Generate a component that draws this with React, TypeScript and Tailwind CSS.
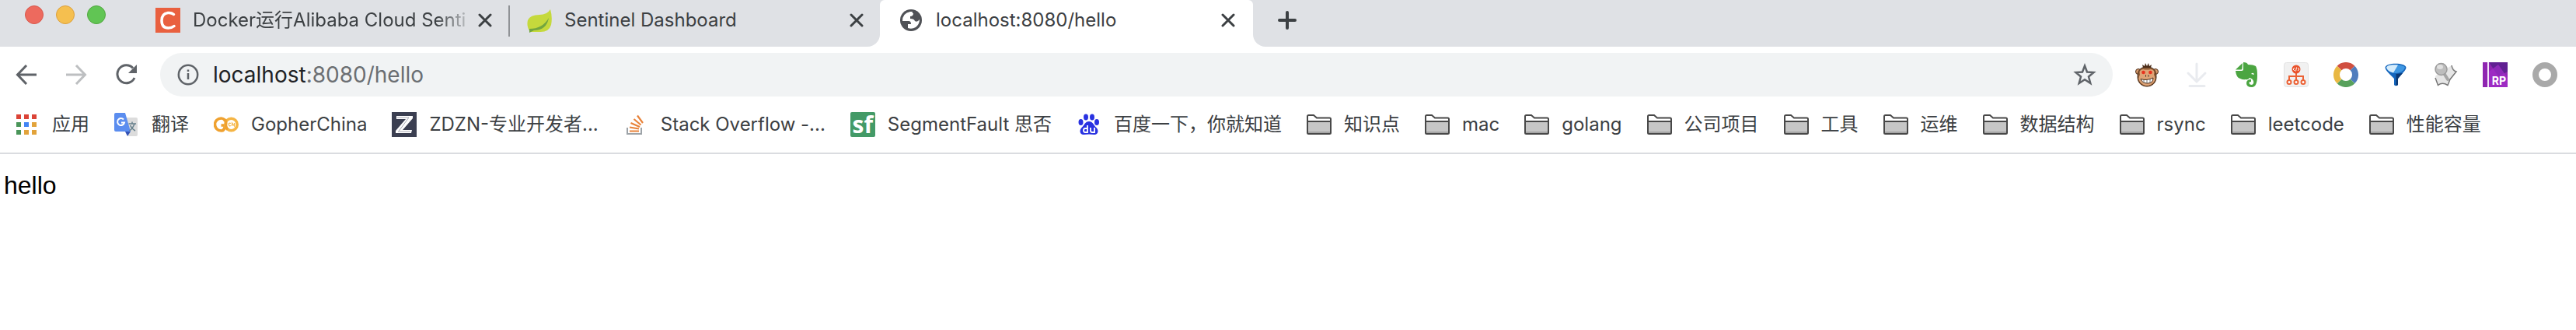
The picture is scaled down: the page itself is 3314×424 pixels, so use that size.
import { ReactNode } from "react";

const bookmarkText = "text-2xl leading-8 whitespace-nowrap text-[#3c4043]";

function Close() {
  return (
    <button aria-label="Close tab" className="flex size-6 items-center justify-center">
      <svg viewBox="0 0 18 18" className="size-[18px]" stroke="#3c4043" strokeWidth="3" strokeLinecap="round">
        <path d="M2 2L16 16M16 2L2 16" />
      </svg>
    </button>
  );
}

function FolderIcon() {
  return (
    <svg viewBox="0 0 32 32" className="size-8">
      <path d="M1 26V5.500Q1 4 2.500 4H9L13 7.500H29.500Q31 7.500 31 9V26.500Q31 28 29.500 28H2.500Q1 28 1 26.500Z" fill="#fff" />
      <path d="M2 12H30V27H2Z" fill="#c6c6c6" />
      <path d="M2 25H30V27H2Z" fill="#a6a6a6" />
      <path d="M1 12H31M1 26V5.500Q1 4 2.500 4H9L13 7.500H29.500Q31 7.500 31 9V26.500Q31 28 29.500 28H2.500Q1 28 1 26.500Z" fill="none" stroke="#484848" strokeWidth="2" />
    </svg>
  );
}

const appDots = ["#db4437", "#db4437", "#db4437", "#4a9559", "#4285f4", "#e2a33b", "#4a9559", "#e2a33b", "#e2a33b"];

function AppsIcon() {
  return (
    <svg viewBox="0 0 26 26" className="size-[26px]">
      {appDots.map((fill, i) => (
        <rect key={i} x={(i % 3) * 10} y={Math.floor(i / 3) * 10} width="6" height="6" fill={fill} />
      ))}
    </svg>
  );
}

function TranslateIcon() {
  return (
    <svg viewBox="0 0 32 32" className="size-8">
      <path d="M12 7H28Q30 7 30 9V29Q30 31 28 31H18Z" fill="#dcdcdc" />
      <path d="M14 25H21L17 31Z" fill="#3352b5" />
      <path d="M2 1H14L21 25H2Q0 25 0 23V3Q0 1 2 1Z" fill="#5b8def" />
      <path d="M12 9.500A4.500 4.500 0 1 0 13 13.500H9" fill="none" stroke="#fff" strokeWidth="2" />
      <path d="M18.500 15H28M23 12.500V15M26 15Q24 21 19.500 24M20.500 17Q23 22 27 24" fill="none" stroke="#67808c" strokeWidth="1.500" />
    </svg>
  );
}

function GopherIcon() {
  return (
    <svg viewBox="0 0 32 32" className="size-8" fill="none">
      <path d="M14 10Q12 8 9.500 8A8 8 0 0 0 9.500 24Q14 24 14.500 17H9.500" stroke="#efa12f" strokeWidth="3.600" />
      <circle cx="22.500" cy="16" r="7.700" stroke="#f5b545" strokeWidth="3.600" />
      <path d="M13 9.500Q16.500 11 15.500 17Q15.500 20 18 22.500" stroke="#efa12f" strokeWidth="3.600" />
      <path d="M22 14.500Q19 13.500 19.300 16T22 17.500M23.500 18V14L26.500 18V14" stroke="#f5b545" strokeWidth="1.200" />
    </svg>
  );
}

function ZIcon() {
  return (
    <svg viewBox="0 0 32 32" className="size-8">
      <path d="M0 0H32V32H0Z" fill="#3b3f51" />
      <path d="M6 5H27V8L14 23H26L25 27H5V24L18 9H6Z" fill="#fff" />
      <path d="M7 7H22M22 7L9 24.500M8 25H24" fill="none" stroke="#a8a9b3" strokeWidth="1" />
    </svg>
  );
}

function StackIcon() {
  return (
    <svg viewBox="0 0 32 32" className="size-8" fill="none">
      <path d="M5 20V28H23V20" stroke="#9da3a8" strokeWidth="2" />
      <path d="M8 24.500H20M8 19.500L20 21.500M9.500 14L21 19M13.500 9L22.500 16.500M18 4.500L25 14" stroke="#e8833a" strokeWidth="2.200" />
    </svg>
  );
}

function SegmentIcon() {
  return (
    <span className="flex size-8 items-center justify-center rounded-xs bg-[#439a67] font-['Open_Sans',sans-serif] text-[30px] leading-8 font-bold text-white">
      sf
    </span>
  );
}

function BaiduIcon() {
  return (
    <svg viewBox="0 0 32 32" className="size-8" fill="#2932e1">
      <ellipse cx="5.500" cy="13" rx="3" ry="4" />
      <ellipse cx="12" cy="6.500" rx="3" ry="4" />
      <ellipse cx="20" cy="6.500" rx="3" ry="4" />
      <ellipse cx="26" cy="13" rx="3" ry="4" />
      <path d="M16 12C11 12 10 17 7 19.500C3 23 4 29 9 29Q16 28 23 29C28 29 29 23 25 19.500C22 17 21 12 16 12Z" />
      <path d="M14 17V26H11Q9 26 9 23.500T11 21H14M18 20V24Q18 26 20 26H23V20" fill="none" stroke="#fff" strokeWidth="1.800" />
    </svg>
  );
}

const bookmarks: { label: string; icon: ReactNode }[] = [
  { label: "翻译", icon: <TranslateIcon /> },
  { label: "GopherChina", icon: <GopherIcon /> },
  { label: "ZDZN-专业开发者...", icon: <ZIcon /> },
  { label: "Stack Overflow -...", icon: <StackIcon /> },
  { label: "SegmentFault 思否", icon: <SegmentIcon /> },
  { label: "百度一下，你就知道", icon: <BaiduIcon /> },
];

const folders = ["知识点", "mac", "golang", "公司项目", "工具", "运维", "数据结构", "rsync", "leetcode", "性能容量"];

function Extensions() {
  return (
    <div className="flex items-center gap-8">
      <button aria-label="Violentmonkey">
        <svg viewBox="0 0 32 32" className="size-8">
          <circle cx="5" cy="12" r="3.500" fill="#d79a6c" stroke="#4a2c18" />
          <circle cx="27" cy="12" r="3.500" fill="#d79a6c" stroke="#4a2c18" />
          <path d="M16 6C7 6 4 11 4 19C4 26 9 31 16 31S28 26 28 19C28 11 25 6 16 6Z" fill="#8b5a34" stroke="#4a2c18" />
          <path d="M11 7L10 3L13 5L14 1L16 5L18 1L19 5L22 3L21 7Z" fill="#4a2c18" />
          <path d="M11 9Q5 10 7 16Q4 21 7 25Q11 30 16 30T25 25Q28 21 25 16Q27 10 21 9Q16 10 11 9Z" fill="#dfa477" />
          <circle cx="11.500" cy="13" r="2.300" fill="#e8321e" />
          <circle cx="20.500" cy="13" r="2.300" fill="#e8321e" />
          <path d="M14 17.500H15M17.500 17.500H18.500" stroke="#222" strokeWidth="2" />
          <path d="M8 21.500Q16 24 24 20Q24 27 17 27Q10 27 8 21.500Z" fill="#fff" stroke="#4a2c18" />
          <path d="M12 23V26M16 23V27M20 22V26" stroke="#777" />
        </svg>
      </button>
      <button aria-label="Download">
        <svg viewBox="0 0 32 32" className="size-8" fill="none" stroke="#e9ebef" strokeWidth="3" strokeLinecap="round">
          <path d="M16 2V24M5 14L16 25L27 14M7 30.500H26" />
        </svg>
      </button>
      <button aria-label="Evernote">
        <svg viewBox="0 0 32 32" className="size-8" fill="#4ba541">
          <path d="M11 1L2 9.500H9Q10.500 9.500 10.500 8Z" />
          <path d="M12 0Q17 0 18 3Q25 3 28 5Q30 8 30 17Q30 32 23 32Q16 32 16 27Q16 22 22 22V25Q19 25 19.500 27Q20 29 23 29Q26 28 25 24Q24 21 20 20Q18 23 15 22Q12 23 8 21Q3 20 2 11H10Q12 11 12 9Z" />
          <path d="M22 15Q25 12 26 16Z" fill="#fff" />
        </svg>
      </button>
      <button aria-label="Sitemap">
        <svg viewBox="0 0 32 32" className="size-8" fill="none" stroke="#ec6235" strokeWidth="2">
          <rect x=".5" y=".5" width="31" height="31" rx="3" fill="#f1f1f1" stroke="#e2e2e2" strokeWidth="1" />
          <path d="M16 13V24M7 24V18H25V24" />
          <circle cx="16" cy="9" r="5.500" fill="#e9532c" stroke="none" />
          <path d="M14 7L12 9L14 11M18 7L20 9L18 11M16.500 6.500L15.500 11.500" stroke="#fff" strokeWidth="1" />
          <circle cx="7" cy="25.500" r="2.500" fill="#fff" />
          <circle cx="16" cy="25.500" r="2.500" fill="#fff" />
          <circle cx="25" cy="25.500" r="2.500" fill="#fff" />
        </svg>
      </button>
      <button aria-label="Color ring">
        <svg viewBox="0 0 32 32" className="size-8" fill="none" strokeWidth="8">
          <path d="M7.500 7.500A12 12 0 0 1 24.500 7.500" stroke="#d04f40" />
          <path d="M24.500 7.500A12 12 0 0 1 24.500 24.500" stroke="#507dbd" />
          <path d="M24.500 24.500A12 12 0 0 1 7.500 24.500" stroke="#58a15c" />
          <path d="M7.500 24.500A12 12 0 0 1 7.500 7.500" stroke="#e9b843" />
        </svg>
      </button>
      <button aria-label="Filter">
        <svg viewBox="0 0 32 32" className="size-8">
          <path d="M2.500 7C2.500 0 29.500 0 29.500 7Q29 10 25 14L19 21V29Q16 31.500 14 29V21L7 14Q3 10 2.500 7Z" fill="#1566bd" />
          <path d="M25 14L19 21V29Q18 30 16.500 30V15Z" fill="#0b3874" />
          <path d="M4 7C5 2 27 2 28 7Q25 14 16 14T4 7Z" fill="#3f97e2" />
          <path d="M4 7C5 3 12 3 19 3.500L13 13.500Q6 12 4 7Z" fill="#d6ecfb" />
        </svg>
      </button>
      <button aria-label="Page search">
        <svg viewBox="0 0 32 32" className="size-8">
          <path d="M3 18L6 30Q12 25 19 29L22 22L30 12L24 4L18 8L7 14Z" fill="#e6e6e6" />
          <path d="M3 20L6.500 29.500Q12 25 19 29.500L22 22L30 12Q25 11 24 4" fill="none" stroke="#777" strokeWidth="1.500" />
          <path d="M14 14L19 22" stroke="#a6a6a6" strokeWidth="4" strokeLinecap="round" />
          <circle cx="10.500" cy="9" r="7.500" fill="#bdbdbd" stroke="#9b9b9b" strokeWidth="1.500" />
          <ellipse cx="9" cy="6" rx="4" ry="3" fill="#e0e0e0" />
        </svg>
      </button>
      <button aria-label="Axure RP" className="relative">
        <svg viewBox="0 0 32 32" className="size-8">
          <path d="M0 0H32V32H0Z" fill="#8f25b1" />
          <path d="M8 0H32V12L20 18Z" fill="#602092" />
          <path d="M8 12L20 3L32 20V32H8Z" fill="#a32dcb" opacity=".7" />
          <path d="M7 0V32" stroke="#f4e4fa" strokeWidth="2" />
        </svg>
        <span className="absolute right-0.5 bottom-0 text-sm leading-4 font-bold text-white">RP</span>
      </button>
      <button aria-label="Profile" className="size-8 rounded-full border-8 border-[#a9a9a9]" />
    </div>
  );
}

function Tabs() {
  return (
    <header className="flex h-15 bg-[#dfe1e5]">
      <div className="flex gap-4 pt-[7px] pl-8">
        <span className="size-6 rounded-full border border-[#d9584c] bg-[#ed6a5e]" />
        <span className="size-6 rounded-full border border-[#dca03c] bg-[#f5bf4f]" />
        <span className="size-6 rounded-full border border-[#51a73f] bg-[#61c554]" />
      </div>
      <nav className="flex pl-12 text-2xl text-[#3c4043]">
        <div className="flex h-[52px] w-[470px] items-center pr-[18px] pl-4">
          <svg viewBox="0 0 32 32" className="mr-4 size-8 shrink-0">
            <path d="M0 0H32V32H0Z" fill="#e9603f" />
            <path d="M23.500 8.500Q20.500 6 16 6.500Q8 7.500 8 16.500Q8 26 16.500 26Q21 26 24 23.500" fill="none" stroke="#fff" strokeWidth="3.500" strokeLinecap="round" />
          </svg>
          <a href="#docker" className="flex-1 whitespace-nowrap [mask-image:linear-gradient(to_right,#000_86%,transparent)]">
            Docker运行Alibaba Cloud Senti
          </a>
          <Close />
        </div>
        <div className="mt-[7px] h-10 w-0.5 bg-[#8f9296]" />
        <div className="bg-white">
          <div className="flex h-15 w-[476px] items-start rounded-br-2xl bg-[#dfe1e5] pr-[18px] pl-[22px]">
            <div className="flex h-[52px] flex-1 items-center gap-4">
              <svg viewBox="0 0 32 32" className="size-8 shrink-0">
                <path d="M30 2Q33 12 31 22Q28 32 15 31H4Q-1 24 1 16Q4 9 16 9Q26 9 30 2Z" fill="#c5d93c" />
                <path d="M3 32V27Q20 27 28 13Q25 29 9 29Z" fill="#73a63f" />
              </svg>
              <a href="#sentinel" className="flex-1 whitespace-nowrap">Sentinel Dashboard</a>
              <Close />
            </div>
          </div>
        </div>
        <div className="flex h-15 w-[480px] items-start rounded-t-md bg-white pr-5 pl-6">
          <div className="flex h-[52px] flex-1 items-center gap-4">
            <svg viewBox="0 0 32 32" className="size-8 shrink-0">
              <circle cx="16" cy="16" r="14" fill="#505257" />
              <path d="M15 5Q5 7 5 17H13Q16 17 16 21H12V26Q17 28 22 25Q27 21 27 15Q24 19 21 17Q20 14 15 14V11Q19 11 19 7Q17 7 18 5Z" fill="#fff" />
            </svg>
            <a href="#hello" className="flex-1 whitespace-nowrap">localhost:8080/hello</a>
            <Close />
          </div>
        </div>
        <div className="bg-white">
          <div className="flex h-15 rounded-bl-2xl bg-[#dfe1e5] pl-8">
            <button aria-label="New tab" className="flex h-[52px] items-center">
              <svg viewBox="0 0 24 24" className="size-6" stroke="#3c4043" strokeWidth="4" strokeLinecap="round">
                <path d="M12 2V22M2 12H22" />
              </svg>
            </button>
          </div>
        </div>
      </nav>
    </header>
  );
}

function Toolbar() {
  return (
    <div className="flex items-center pt-2 pr-6 pl-[18px]">
      <div className="flex gap-8">
        <button aria-label="Back">
          <svg viewBox="0 0 32 32" className="size-8" fill="none" stroke="#5f6368" strokeWidth="3">
            <path d="M29 16H5M16 4L4.500 16L16 28" />
          </svg>
        </button>
        <button aria-label="Forward">
          <svg viewBox="0 0 32 32" className="size-8" fill="none" stroke="#bdbfc1" strokeWidth="3">
            <path d="M3 16H27M16 4L27.500 16L16 28" />
          </svg>
        </button>
        <button aria-label="Reload">
          <svg viewBox="0 0 32 32" className="size-8" fill="none" stroke="#5f6368" strokeWidth="3">
            <path d="M25 7.500A11.500 11.500 0 1 0 27 20" />
            <path d="M30 3V14H19Z" fill="#5f6368" stroke="none" />
          </svg>
        </button>
      </div>
      <div className="ml-7 flex h-14 flex-1 items-center rounded-full bg-[#f1f3f4] pr-5 pl-[22px]">
        <button aria-label="Site information">
          <svg viewBox="0 0 28 28" className="size-7" fill="none" stroke="#5f6368" strokeWidth="2.500">
            <circle cx="14" cy="14" r="12.200" />
            <path d="M14 12V20M14 7.500V10" />
          </svg>
        </button>
        <p className="flex-1 pl-[18px] text-[28px] leading-10 text-[#6b6e72]">
          <span className="text-[#202124]">localhost</span>:8080/hello
        </p>
        <button aria-label="Bookmark this page">
          <svg viewBox="0 0 32 32" className="size-8" fill="none" stroke="#5f6368" strokeWidth="2.500">
            <path d="M16 4.500L19 12.500L27.500 13L21 18.500L23.300 27L16 22.300L8.700 27L11 18.500L4.500 13L13 12.500Z" />
          </svg>
        </button>
      </div>
      <div className="pl-7">
        <Extensions />
      </div>
    </div>
  );
}

export default function App() {
  return (
    <div className="bg-white font-[Inter,'Noto_Sans_CJK_SC',sans-serif]">
      <Tabs />
      <Toolbar />
      <nav className="flex h-[74px] items-center gap-8 overflow-hidden border-b-2 border-[#dadce0] pl-[21px]">
        <a href="#apps" className="flex shrink-0 items-center gap-5">
          <AppsIcon />
          <span className={bookmarkText}>应用</span>
        </a>
        {bookmarks.map((b) => (
          <a key={b.label} href="#bookmark" className="flex shrink-0 items-center gap-4">
            {b.icon}
            <span className={bookmarkText}>{b.label}</span>
          </a>
        ))}
        {folders.map((name) => (
          <button key={name} className="flex shrink-0 items-center gap-4">
            <FolderIcon />
            <span className={bookmarkText}>{name}</span>
          </button>
        ))}
      </nav>
      <main className="pt-5 pl-[5px] font-['Liberation_Sans',sans-serif] text-[32px] leading-10 text-black">hello</main>
    </div>
  );
}
